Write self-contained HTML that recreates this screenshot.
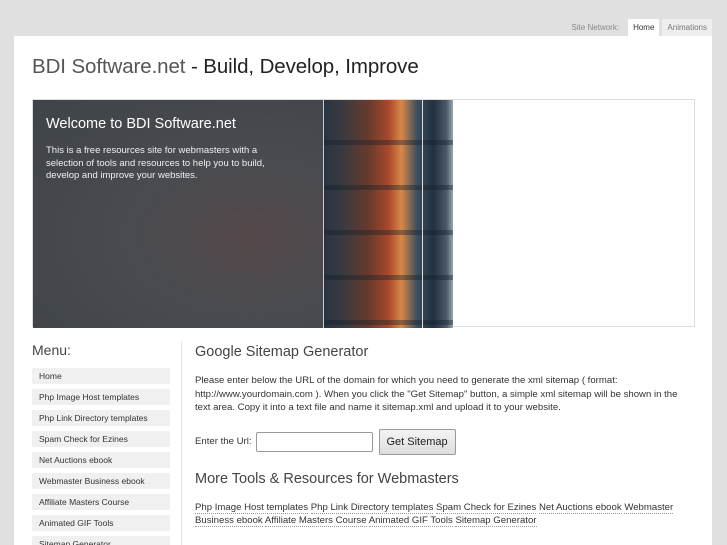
<!DOCTYPE html>
<html style="width:727px;height:545px;overflow:hidden"><head><meta charset="utf-8"><style>
*{margin:0;padding:0;box-sizing:border-box}
body{width:727px;height:545px;background:#e0e0e0;font-family:"Liberation Sans",sans-serif;overflow:hidden;position:relative;color:#333}
.topnav{position:absolute;top:19px;right:15px;height:17px;font-size:8px;color:#888;display:flex;align-items:center}
.topnav span{padding:0 6px}
.topnav .t{height:17px;line-height:17px;padding:0 5px;background:#eee;color:#777;margin-left:3px}
.topnav .t.a{background:#fff;color:#333}
.page{position:absolute;left:14px;top:36px;width:698px;height:509px;background:#fff;overflow:hidden}
h1{position:absolute;left:18px;top:19px;font-size:20.5px;font-weight:normal;color:#555;letter-spacing:-0.1px}
h1 b{font-weight:normal;color:#222}
.banner{position:absolute;left:18px;top:63px;width:663px;height:228px;border:1px solid #ddd;background:#fff}
.dark{position:absolute;left:0;top:0;width:290px;height:228px;background:radial-gradient(ellipse at 75% 60%,#55484a 0%,#484b50 40%,#3f4448 100%)}
.dark h2{position:absolute;left:13px;top:16px;font-size:14.5px;font-weight:normal;color:#fff}
.dark p{position:absolute;left:13px;top:45px;width:250px;font-size:9.5px;line-height:12.5px;color:#f0f0f0}
.img{position:absolute;left:290px;top:0;width:130px;height:228px;background:linear-gradient(90deg,#2a3440 0%,#3a3a40 15%,#6a3a2a 35%,#a8482a 50%,#d88848 60%,#3a5060 72%,#223040 85%,#4a5a68 95%,#9aa 100%);border-left:1px solid #ccc}
.img:before{content:"";position:absolute;left:0;top:0;right:0;bottom:0;background:repeating-linear-gradient(180deg,rgba(0,0,0,0) 0 40px,rgba(20,30,40,.4) 40px 45px)}
.img:after{content:"";position:absolute;left:98px;top:0;width:1px;height:228px;background:#ddd}
.menu{position:absolute;left:18px;top:306px;width:138px}
.menu h3{font-size:14px;font-weight:normal;color:#444;margin-bottom:10px}
.menu div{height:16px;line-height:16px;background:#f0f0f0;font-size:8.5px;color:#333;padding-left:7px;margin-bottom:5px}
.vline{position:absolute;left:167px;top:305px;width:1px;height:220px;background:#e4e4e4}
.main{position:absolute;left:181px;top:308px;width:500px;font-size:9.6px;color:#333}
.main h3{font-size:14.5px;font-weight:normal;color:#444;margin-bottom:14px}
.main p{line-height:13.5px}
.form{margin-top:14px;display:flex;align-items:center}
.form input{width:117px;height:20px;border:1px solid #999;border-radius:2px;margin-left:4px}
.form button{margin-left:6px;height:26px;width:77px;border:1px solid #999;border-radius:2px;background:linear-gradient(#f4f4f4,#ddd);font-family:inherit;font-size:11px;color:#222}
.links{line-height:13px}
.links a{color:#333;text-decoration:none;border-bottom:1px dotted #999}
</style></head><body>
<div class="topnav"><span>Site Network:</span><div class="t a">Home</div><div class="t">Animations</div></div>
<div class="page">
<h1>BDI Software.net <b>- Build, Develop, Improve</b></h1>
<div class="banner"><div class="dark"><h2>Welcome to BDI Software.net</h2><p>This is a free resources site for webmasters with a selection of tools and resources to help you to build, develop and improve your websites.</p></div><div class="img"></div></div>
<div class="menu"><h3>Menu:</h3>
<div>Home</div><div>Php Image Host templates</div><div>Php Link Directory templates</div><div>Spam Check for Ezines</div><div>Net Auctions ebook</div><div>Webmaster Business ebook</div><div>Affiliate Masters Course</div><div>Animated GIF Tools</div><div>Sitemap Generator</div></div>
<div class="vline"></div>
<div class="main"><h3>Google Sitemap Generator</h3>
<p>Please enter below the URL of the domain for which you need to generate the xml sitemap ( format: http://www.yourdomain.com ). When you click the "Get Sitemap" button, a simple xml sitemap will be shown in the text area. Copy it into a text file and name it sitemap.xml and upload it to your website.</p>
<div class="form">Enter the Url: <input><button>Get Sitemap</button></div>
<h3 style="margin-top:16px">More Tools &amp; Resources for Webmasters</h3>
<p class="links"><a>Php Image Host templates</a> <a>Php Link Directory templates</a> <a>Spam Check for Ezines</a> <a>Net Auctions ebook</a> <a>Webmaster Business ebook</a> <a>Affiliate Masters Course</a> <a>Animated GIF Tools</a> <a>Sitemap Generator</a></p>
</div>
</div>
</body></html>
